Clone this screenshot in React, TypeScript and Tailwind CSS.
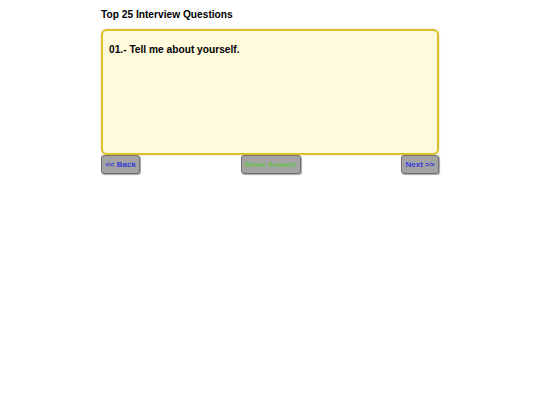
export default function App() {
  return (
    <div className="min-h-[405px] bg-white font-['Liberation_Sans',Arial,sans-serif]">
      <div className="mx-auto w-[338px] pt-[8px]">
        <h1 className="text-[10.2px] font-bold leading-[13px] text-black">Top 25 Interview Questions</h1>

        <div className="mt-[8px] h-[126px] rounded-[6px] border-2 border-[#d8c22a] bg-[#fffadc] px-[6px] pt-[12px] shadow-[0_0_2px_rgba(180,150,0,0.5)]">
          <p className="text-[10.2px] font-bold leading-[14px] text-black">01.- Tell me about yourself.</p>
        </div>

        <div className="flex items-start justify-between">
          <button className="h-[19px] w-[39px] rounded-[3px] border border-[#707070] bg-[#a3a3a3] text-[8px] font-bold text-[#3a3ad6] shadow-[1px_1px_1px_rgba(0,0,0,0.35)]">
            &lt;&lt; Back
          </button>
          <button className="h-[19px] w-[60px] rounded-[3px] border border-[#707070] bg-[#a3a3a3] text-[8px] font-bold text-[#6cc04a] shadow-[1px_1px_1px_rgba(0,0,0,0.35)]">
            Show Answer
          </button>
          <button className="h-[19px] w-[38px] rounded-[3px] border border-[#707070] bg-[#a3a3a3] text-[8px] font-bold text-[#3a3ad6] shadow-[1px_1px_1px_rgba(0,0,0,0.35)]">
            Next &gt;&gt;
          </button>
        </div>
      </div>
    </div>
  );
}
